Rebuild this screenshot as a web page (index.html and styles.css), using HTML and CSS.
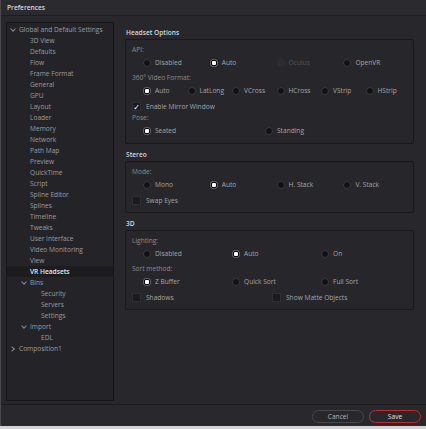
FILE: index.html
```html
<!DOCTYPE html>
<html>
<head>
<meta charset="utf-8">
<link rel="stylesheet" href="styles.css">
</head>
<body>
<div class="window">
  <div class="titlebar">Preferences</div>
  <div class="main">
    <div class="tree">
      <div class="node l0"><span class="chev down"></span>Global and Default Settings</div>
      <div class="node l1">3D View</div>
      <div class="node l1">Defaults</div>
      <div class="node l1">Flow</div>
      <div class="node l1">Frame Format</div>
      <div class="node l1">General</div>
      <div class="node l1">GPU</div>
      <div class="node l1">Layout</div>
      <div class="node l1">Loader</div>
      <div class="node l1">Memory</div>
      <div class="node l1">Network</div>
      <div class="node l1">Path Map</div>
      <div class="node l1">Preview</div>
      <div class="node l1">QuickTime</div>
      <div class="node l1">Script</div>
      <div class="node l1">Spline Editor</div>
      <div class="node l1">Splines</div>
      <div class="node l1">Timeline</div>
      <div class="node l1">Tweaks</div>
      <div class="node l1">User Interface</div>
      <div class="node l1">Video Monitoring</div>
      <div class="node l1">View</div>
      <div class="node l1 selected">VR Headsets</div>
      <div class="node l1c"><span class="chev down"></span>Bins</div>
      <div class="node l2">Security</div>
      <div class="node l2">Servers</div>
      <div class="node l2">Settings</div>
      <div class="node l1c"><span class="chev down"></span>Import</div>
      <div class="node l2">EDL</div>
      <div class="node l0"><span class="chev right"></span>Composition1</div>
    </div>
    <div class="content">
      <div class="heading">Headset Options</div>
      <div class="group">
        <div class="lbl">API:</div>
        <div class="row cols4">
          <div class="radio"><span class="dot"></span>Disabled</div>
          <div class="radio"><span class="dot on"></span>Auto</div>
          <div class="radio disabled"><span class="dot"></span>Oculus</div>
          <div class="radio"><span class="dot"></span>OpenVR</div>
        </div>
        <div class="lbl gap">360° Video Format:</div>
        <div class="row cols6">
          <div class="radio"><span class="dot on"></span>Auto</div>
          <div class="radio"><span class="dot"></span>LatLong</div>
          <div class="radio"><span class="dot"></span>VCross</div>
          <div class="radio"><span class="dot"></span>HCross</div>
          <div class="radio"><span class="dot"></span>VStrip</div>
          <div class="radio"><span class="dot"></span>HStrip</div>
        </div>
        <div class="checkrow gap">
          <div class="check"><span class="box checked">✓</span>Enable Mirror Window</div>
        </div>
        <div class="lbl">Pose:</div>
        <div class="row colspose">
          <div class="radio"><span class="dot on"></span>Seated</div>
          <div class="radio"><span class="dot"></span>Standing</div>
        </div>
      </div>

      <div class="heading">Stereo</div>
      <div class="group">
        <div class="lbl">Mode:</div>
        <div class="row cols4">
          <div class="radio"><span class="dot"></span>Mono</div>
          <div class="radio"><span class="dot on"></span>Auto</div>
          <div class="radio"><span class="dot"></span>H. Stack</div>
          <div class="radio"><span class="dot"></span>V. Stack</div>
        </div>
        <div class="checkrow gap">
          <div class="check"><span class="box"></span>Swap Eyes</div>
        </div>
      </div>

      <div class="heading">3D</div>
      <div class="group">
        <div class="lbl">Lighting:</div>
        <div class="row cols3">
          <div class="radio"><span class="dot"></span>Disabled</div>
          <div class="radio"><span class="dot on"></span>Auto</div>
          <div class="radio"><span class="dot"></span>On</div>
        </div>
        <div class="lbl gap">Sort method:</div>
        <div class="row cols3">
          <div class="radio"><span class="dot on"></span>Z Buffer</div>
          <div class="radio"><span class="dot"></span>Quick Sort</div>
          <div class="radio"><span class="dot"></span>Full Sort</div>
        </div>
        <div class="checkrow gap cols2">
          <div class="check"><span class="box"></span>Shadows</div>
          <div class="check"><span class="box"></span>Show Matte Objects</div>
        </div>
      </div>
    </div>
  </div>
  <div class="footer">
    <button class="btn">Cancel</button>
    <button class="btn save">Save</button>
  </div>
</div>
</body>
</html>
```

FILE: styles.css
```css
* { box-sizing: border-box; }
html, body {
  margin: 0;
  padding: 0;
  width: 426px;
  height: 429px;
  background: #d4d4d6;
  overflow: hidden;
}
body {
  font-family: "Open Sans", "DejaVu Sans", sans-serif;
  font-size: 6.6px;
  color: #a0a0a2;
}
.window {
  width: 426px;
  height: 426px;
  background: #28282c;
  border-left: 1px solid #4a4a4e;
  display: flex;
  flex-direction: column;
}
.titlebar {
  height: 16px;
  line-height: 15px;
  padding-left: 6px;
  font-size: 6.6px;
  font-weight: 600;
  color: #d8d8da;
  background: #2b2b2f;
  border-bottom: 1px solid #1d1d20;
}
.main {
  display: flex;
  height: 389px;
  padding: 6px 0 0 5px;
  border-bottom: 1px solid #1a1a1d;
}
.tree {
  width: 108px;
  height: 379px;
  background: #242428;
  border: 1px solid #161619;
  padding-top: 1px;
  overflow: hidden;
}
.node {
  height: 11px;
  line-height: 11px;
  white-space: nowrap;
  display: flex;
  align-items: center;
  color: #9c9c9e;
}
.node.l0 { padding-left: 2px; }
.node.l1 { padding-left: 23px; }
.node.l1c { padding-left: 13px; }
.node.l2 { padding-left: 34px; }
.node.selected {
  background: #1c1c1f;
  color: #e6e6e8;
  font-weight: 600;
}
.chev {
  display: inline-block;
  flex: none;
  width: 7px;
  height: 8px;
  margin-right: 3px;
  position: relative;
}
.chev::before {
  content: "";
  position: absolute;
  width: 3px;
  height: 3px;
  border-right: 1px solid #8a8a8c;
  border-bottom: 1px solid #8a8a8c;
}
.chev.down::before { left: 1.5px; top: 1.5px; transform: rotate(45deg); }
.chev.right::before { left: 0.5px; top: 2.5px; transform: rotate(-45deg); }

.content {
  margin-left: 11px;
  width: 289px;
}
.heading {
  height: 12px;
  line-height: 12px;
  margin-top: 5px;
  font-weight: 600;
  color: #d6d6d8;
  padding-left: 1px;
}
.group {
  border: 1px solid #19191c;
  border-radius: 2px;
  background: #27272b;
  padding: 4px 0 6px 6px;
}
.lbl {
  height: 12px;
  line-height: 12px;
  color: #8c8c8e;
}
.row {
  height: 13px;
  display: grid;
  margin-left: 11px;
  align-items: center;
}
.gap { margin-top: 3px; }
.cols4 { grid-template-columns: repeat(4, 66.8px); }
.cols6 { grid-template-columns: repeat(6, 44.5px); }
.cols3 { grid-template-columns: repeat(3, 89px); }
.colspose { grid-template-columns: 122px 100px; }
.radio {
  display: flex;
  align-items: center;
  white-space: nowrap;
  color: #a4a4a6;
}
.radio.disabled { color: #555558; }
.dot {
  width: 8px;
  height: 8px;
  border-radius: 50%;
  background: #111113;
  border: 1px solid #3a3a3e;
  margin-right: 4px;
  flex: none;
}
.radio.disabled .dot { background: #2d2d31; border-color: #2d2d31; }
.dot.on {
  border: none;
  background: radial-gradient(circle, #ffffff 0 2px, #0c0c0d 2.5px 3.2px, #6a6a6e 3.6px);
}
.checkrow {
  height: 12px;
  display: grid;
  align-items: center;
}
.cols2 { grid-template-columns: 140px 140px; }
.check {
  display: flex;
  align-items: center;
  white-space: nowrap;
  color: #a4a4a6;
}
.box {
  width: 9px;
  height: 9px;
  background: #1b1b1e;
  border: 1px solid #303034;
  margin-right: 5px;
  flex: none;
  font-size: 8px;
  line-height: 7px;
  text-align: center;
  color: #ffffff;
}
.footer {
  flex: 1;
  display: flex;
  justify-content: flex-end;
  align-items: flex-start;
  padding: 5px 5px 0 0;
  gap: 5px;
  background: #29292d;
}
.btn {
  width: 52px;
  height: 13px;
  border-radius: 7px;
  border: 1px solid #47474b;
  background: #28282c;
  color: #b4b4b6;
  font-family: "Open Sans", "DejaVu Sans", sans-serif;
  font-size: 6.6px;
  line-height: 11px;
  padding: 0;
}
.btn.save {
  border-color: #c8262d;
  color: #e0e0e2;
}
```
